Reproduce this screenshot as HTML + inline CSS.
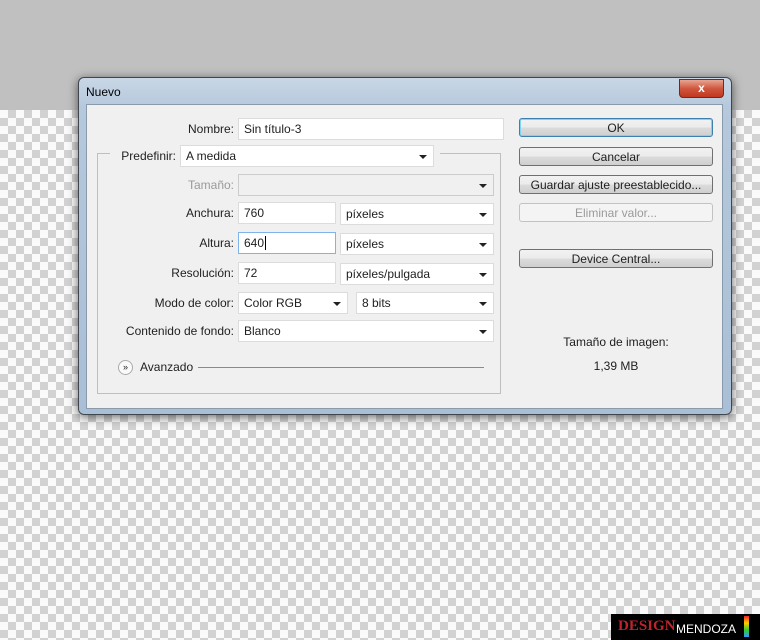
<!DOCTYPE html>
<html><head><meta charset="utf-8"><style>
*{box-sizing:border-box;margin:0;padding:0}
body{width:760px;height:640px;overflow:hidden;position:relative;font-family:"Liberation Sans",sans-serif;font-size:12px;color:#1e1e1e;
background-color:#fafafa;background-image:linear-gradient(45deg,#d2d2d2 25%,transparent 25%,transparent 75%,#d2d2d2 75%),linear-gradient(45deg,#d2d2d2 25%,transparent 25%,transparent 75%,#d2d2d2 75%);background-size:16px 16px;background-position:0 110px,8px 118px}
.top{position:absolute;left:0;top:0;width:760px;height:110px;background:#c0c0c0}
.a{position:absolute}
.win{left:78px;top:77px;width:654px;height:338px;border-radius:6px;background:linear-gradient(#c9d7e6,#b5c8dc 30px,#a9bfd6);border:1px solid #40464d;box-shadow:0 2px 10px rgba(0,0,0,.6)}
.panel{left:86px;top:104px;width:637px;height:305px;background:#f0f0f0;border:1px solid #8a9aaa}
.lab{position:absolute;text-align:right;width:200px;line-height:22px}
.in{position:absolute;background:#fff;border:1px solid #dcdcdc;height:22px;line-height:20px;padding-left:5px}
.sel:after{content:"";position:absolute;right:6px;top:9px;border-left:4px solid transparent;border-right:4px solid transparent;border-top:4px solid #222}
.btn{position:absolute;left:519px;width:194px;height:19px;border:1px solid #707070;border-radius:3px;background:linear-gradient(#f2f2f2,#ebebeb 50%,#dcdcdc 50%,#cfcfcf);text-align:center;line-height:18px}
</style></head><body>
<div class="top"></div>
<div class="a win"></div>
<div class="a" style="left:86px;top:85px;line-height:14px;color:#000">Nuevo</div>
<div class="a" style="left:679px;top:79px;width:45px;height:19px;border-radius:0 0 4px 4px;border:1px solid #6b2b20;background:linear-gradient(#e8a592,#d0573e 50%,#c1371f);color:#fff;font-weight:bold;text-align:center;line-height:17px;font-size:12px">x</div>
<div class="a panel"></div>
<div class="a" style="left:97px;top:153px;width:404px;height:241px;border:1px solid #bfbfbf"></div>
<div class="a" style="left:110px;top:148px;width:330px;height:12px;background:#f0f0f0"></div>
<div class="lab" style="left:34px;top:118px">Nombre:</div>
<div class="in" style="left:238px;top:118px;width:266px">Sin título-3</div>
<div class="lab" style="left:-24px;top:145px">Predefinir:</div>
<div class="in sel" style="left:180px;top:145px;width:254px">A medida</div>
<div class="lab" style="left:34px;top:174px;color:#9a9a9a">Tamaño:</div>
<div class="in sel" style="left:238px;top:174px;width:256px;background:#f0f0f0;border-color:#ccc"></div>
<div class="lab" style="left:34px;top:202px">Anchura:</div>
<div class="in" style="left:238px;top:202px;width:98px">760</div>
<div class="in sel" style="left:340px;top:203px;width:154px">píxeles</div>
<div class="lab" style="left:34px;top:232px">Altura:</div>
<div class="in" style="left:238px;top:232px;width:98px;border-color:#7eb4ea">640<span style="border-left:1px solid #000;margin-left:1px"></span></div>
<div class="in sel" style="left:340px;top:233px;width:154px">píxeles</div>
<div class="lab" style="left:34px;top:262px">Resolución:</div>
<div class="in" style="left:238px;top:262px;width:98px">72</div>
<div class="in sel" style="left:340px;top:263px;width:154px">píxeles/pulgada</div>
<div class="lab" style="left:34px;top:292px">Modo de color:</div>
<div class="in sel" style="left:238px;top:292px;width:110px">Color RGB</div>
<div class="in sel" style="left:356px;top:292px;width:138px">8 bits</div>
<div class="lab" style="left:34px;top:320px">Contenido de fondo:</div>
<div class="in sel" style="left:238px;top:320px;width:256px">Blanco</div>
<div class="a" style="left:118px;top:360px;width:15px;height:15px;border:1px solid #aaa;border-radius:50%;background:#fafafa;font-size:9px;text-align:center;line-height:13px">»</div>
<div class="a" style="left:140px;top:360px;line-height:15px">Avanzado</div>
<div class="a" style="left:198px;top:367px;width:286px;height:1px;background:#8a8a8a"></div>
<div class="btn" style="top:118px;border-color:#3c7fb1;box-shadow:inset 0 0 0 1px #7fd3f7">OK</div>
<div class="btn" style="top:147px">Cancelar</div>
<div class="btn" style="top:175px">Guardar ajuste preestablecido...</div>
<div class="btn" style="top:203px;background:#f4f4f4;border-color:#c2c2c2;color:#9a9a9a">Eliminar valor...</div>
<div class="btn" style="top:249px">Device Central...</div>
<div class="a" style="left:519px;top:335px;width:194px;text-align:center">Tamaño de imagen:</div>
<div class="a" style="left:519px;top:359px;width:194px;text-align:center">1,39 MB</div>
<div class="a" style="left:611px;top:614px;width:149px;height:26px;background:#000"></div>
<div class="a" style="left:618px;top:618px;color:#c0232a;font-weight:bold;font-size:15px;font-family:'Liberation Serif',serif">DESIGN</div>
<div class="a" style="left:676px;top:622px;color:#fff;font-size:12px">MENDOZA</div>
<div class="a" style="left:744px;top:616px;width:5px;height:21px;background:linear-gradient(#e22,#fc0,#3c3,#39f)"></div>
</body></html>
